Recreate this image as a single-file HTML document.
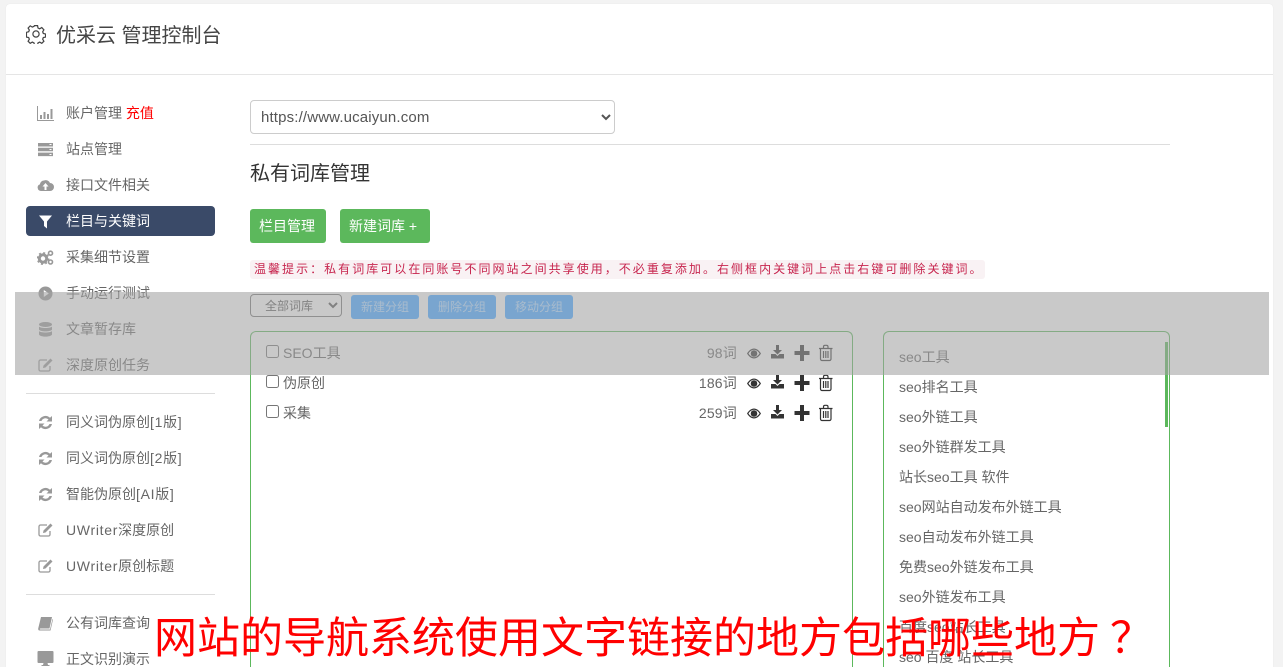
<!DOCTYPE html>
<html lang="zh-CN"><head><meta charset="utf-8"><title>优采云 管理控制台</title>
<style>
html,body{margin:0;padding:0;width:1283px;height:667px;overflow:hidden;background:#f3f3f3}
body{font-family:"Liberation Sans","Noto Sans CJK SC",sans-serif;font-size:14px;color:#555;position:relative}
.a{position:absolute;white-space:nowrap}
#card{left:6px;top:4px;width:1267px;height:663px;background:#fff;border-radius:4px 4px 0 0;box-shadow:0 0 1px #ddd}
.n{left:66px;height:20px;line-height:20px;font-size:14px;color:#666}
.n span{letter-spacing:.7px}
.i{left:37px;width:17px;height:17px;fill:#999}
.r{left:899px;height:20px;line-height:20px;color:#666}
.c{height:20px;line-height:20px;color:#666}
.cb{margin:0;width:13px;height:13px;left:266px}
.bb{top:295px;height:24px;width:68px;line-height:24px;text-align:center;background:#79a5cf;color:#aabccd;font-size:12px;border-radius:3px}
.gb{top:209px;height:34px;line-height:34px;background:#5cb85c;color:#fff;border-radius:3px;font-size:14px;padding-left:9px;box-sizing:border-box}
</style></head><body>
<div class="a" id="card"></div>
<div class="a" style="left:6px;top:74px;width:1267px;height:1px;background:#e5e5e5"></div>
<svg class="a" style="left:26px;top:24px" width="20" height="20" viewBox="0 0 18 18" fill="none" stroke="#444" stroke-width="1.1"><path d="M7.6 1.5h2.8l.4 2.1 1.5.7 1.9-1.1 1.9 2-1.1 1.8.6 1.5 2 .5v2.8l-2 .4-.6 1.500 1.100 1.800-1.900 1.900-1.900-1.100-1.500.7-.4 2h-2.800l-.4-2-1.500-.7-1.900 1.100-1.900-1.900 1.100-1.800-.6-1.500-2-.4V7.500l2-.5.6-1.500-1.100-1.800 1.900-2 1.900 1.100 1.500-.7z"/><circle cx="9" cy="9" r="2.800"/></svg>
<div class="a" style="left:56px;top:21px;height:30px;line-height:30px;font-size:20px;color:#444">优采云 管理控制台</div>

<div class="a" style="left:26px;top:206px;width:189px;height:30px;background:#3a4a68;border-radius:4px"></div>
<div class="a n" style="top:103px">账户管理 <b style="color:#f00;font-size:14px;font-weight:400">充值</b></div>
<div class="a n" style="top:139px">站点管理</div>
<div class="a n" style="top:175px">接口文件相关</div>
<div class="a n" style="top:211px;color:#fff">栏目与关键词</div>
<div class="a n" style="top:247px">采集细节设置</div>
<div class="a n" style="top:283px">手动运行测试</div>
<div class="a n" style="top:319px">文章暂存库</div>
<div class="a n" style="top:355px">深度原创任务</div>
<div class="a" style="left:26px;top:393px;width:189px;height:1px;background:#ddd"></div>
<div class="a n" style="top:412px">同义词伪原创<span>[1版]</span></div>
<div class="a n" style="top:448px">同义词伪原创<span>[2版]</span></div>
<div class="a n" style="top:484px">智能伪原创<span>[AI版]</span></div>
<div class="a n" style="top:520px"><span>UWriter</span>深度原创</div>
<div class="a n" style="top:556px"><span>UWriter</span>原创标题</div>
<div class="a" style="left:26px;top:594px;width:189px;height:1px;background:#ddd"></div>
<div class="a n" style="top:613px">公有词库查询</div>
<div class="a n" style="top:649px">正文识别演示</div>

<!-- sidebar icons -->
<svg class="a i" style="top:105px" viewBox="0 0 17 17"><path d="M0 1h1v14h16v1H0z"/><path d="M3 10h2v4H3zM6.500 7h2v7h-2zM10 9h2v5h-2zM13.500 4h2v10h-2z"/></svg>
<svg class="a i" style="top:141px" viewBox="0 0 17 17"><path d="M1 2h15v3.500H1zM1 6.800h15v3.500H1zM1 11.600h15v3.500H1z"/><path fill="#fff" d="M12.500 3h2v1h-2zM12.500 8h2v1h-2zM12.500 13h2v1h-2z"/></svg>
<svg class="a i" style="top:177px" viewBox="0 0 17 17"><path d="M4 14a3.500 3.500 0 0 1-1-6.800A4 4 0 0 1 7 3.500a4.500 4.500 0 0 1 6 2.500 4 4 0 0 1 0 8z"/><path fill="#fff" d="M8.500 6L5.500 9.500h2V13h2V9.500h2z"/></svg>
<svg class="a i" style="top:213px;fill:#fff" viewBox="0 0 17 17"><path d="M2 2.500h13l-5 6v7l-3-2.500V8.500z"/></svg>
<svg class="a i" style="top:249px" viewBox="0 0 17 17"><circle cx="6" cy="9.500" r="3.700" fill="none" stroke="#999" stroke-width="3"/><circle cx="6" cy="9.500" r="5.600" fill="none" stroke="#999" stroke-width="1.600" stroke-dasharray="2 2.400"/><circle cx="13.500" cy="4.200" r="2" fill="none" stroke="#999" stroke-width="1.600"/><circle cx="13.500" cy="13" r="2" fill="none" stroke="#999" stroke-width="1.600"/></svg>
<svg class="a i" style="top:285px" viewBox="0 0 17 17"><path fill-rule="evenodd" d="M8.500 1.500a7 7 0 1 0 0 14 7 7 0 0 0 0-14zM6.800 5l5 3.500-5 3.500z"/></svg>
<svg class="a i" style="top:321px" viewBox="0 0 17 17"><ellipse cx="8.500" cy="3.500" rx="6.500" ry="2.500"/><path d="M2 5.500c1 2 12 2 13 0v3c-1 2.500-12 2.500-13 0zM2 10c1 2 12 2 13 0v3.500c-1 2.800-12 2.800-13 0z"/></svg>
<svg class="a i" style="top:356px" viewBox="0 0 17 17"><path fill="none" stroke="#999" stroke-width="1.300" d="M13 10v3.500a1.500 1.500 0 0 1-1.500 1.500h-8A1.500 1.500 0 0 1 2 13.500v-8A1.500 1.500 0 0 1 3.500 4H10"/><path d="M6.500 9.500l7-7 2 2-7 7-2.500.5z"/></svg>
<svg class="a i" style="top:414px" viewBox="0 0 17 17"><path d="M2 7a6.600 6.600 0 0 1 11-3.200L15 2v5.500H9.500l2-2A4.300 4.300 0 0 0 4.500 7zM15 10A6.600 6.600 0 0 1 4 13.200L2 15V9.500h5.500l-2 2a4.300 4.300 0 0 0 7-1.500z"/></svg>
<svg class="a i" style="top:450px" viewBox="0 0 17 17"><path d="M2 7a6.600 6.600 0 0 1 11-3.200L15 2v5.500H9.500l2-2A4.300 4.300 0 0 0 4.500 7zM15 10A6.600 6.600 0 0 1 4 13.200L2 15V9.500h5.500l-2 2a4.300 4.300 0 0 0 7-1.500z"/></svg>
<svg class="a i" style="top:486px" viewBox="0 0 17 17"><path d="M2 7a6.600 6.600 0 0 1 11-3.200L15 2v5.500H9.500l2-2A4.300 4.300 0 0 0 4.500 7zM15 10A6.600 6.600 0 0 1 4 13.200L2 15V9.500h5.500l-2 2a4.300 4.300 0 0 0 7-1.500z"/></svg>
<svg class="a i" style="top:521px" viewBox="0 0 17 17"><path fill="none" stroke="#999" stroke-width="1.300" d="M13 10v3.500a1.500 1.500 0 0 1-1.500 1.500h-8A1.500 1.500 0 0 1 2 13.500v-8A1.500 1.500 0 0 1 3.500 4H10"/><path d="M6.500 9.500l7-7 2 2-7 7-2.500.5z"/></svg>
<svg class="a i" style="top:557px" viewBox="0 0 17 17"><path fill="none" stroke="#999" stroke-width="1.300" d="M13 10v3.500a1.500 1.500 0 0 1-1.500 1.500h-8A1.500 1.500 0 0 1 2 13.500v-8A1.500 1.500 0 0 1 3.500 4H10"/><path d="M6.500 9.500l7-7 2 2-7 7-2.500.5z"/></svg>
<svg class="a i" style="top:615px" viewBox="0 0 17 17"><path d="M4 2h11l-2.500 11.500H3.500c-.8 0-1 .9-.2 1H13L15.500 4l.5 .5L13.500 15.500H2.500C1.500 15.500 1 14.500 1.200 13.500z"/></svg>
<svg class="a" style="left:37px;top:650px;fill:#999" width="17" height="17" viewBox="0 0 17 17"><path d="M1.500 1h14a1 1 0 0 1 1 1v10a1 1 0 0 1-1 1H10.500l.5 2h1.500v1h-8v-1H6l.5-2H1.500a1 1 0 0 1-1-1V2a1 1 0 0 1 1-1z"/></svg>

<select class="a" style="left:250px;top:100px;width:365px;height:34px;border:1px solid #ccc;border-radius:4px;background:#fff;color:#555;font:15px 'Liberation Sans',sans-serif;letter-spacing:.15px;padding:0 6px"><option>https://www.ucaiyun.com</option></select>
<div class="a" style="left:250px;top:144px;width:920px;height:1px;background:#ddd"></div>
<div class="a" style="left:250px;top:160px;height:28px;line-height:28px;font-size:20px;color:#333">私有词库管理</div>
<div class="a gb" style="left:250px;width:76px">栏目管理</div>
<div class="a gb" style="left:340px;width:90px">新建词库 +</div>
<div class="a" style="left:250px;top:260px;width:731px;height:19px;line-height:19px;padding-left:4px;background:#f9f2f4;color:#c7254e;font-size:12px;letter-spacing:2.03px;border-radius:3px">温馨提示：私有词库可以在同账号不同网站之间共享使用，不必重复添加。右侧框内关键词上点击右键可删除关键词。</div>

<select class="a" style="left:250px;top:294px;width:92px;height:23px;border:1px solid #777;border-radius:4px;background:#fff;color:#555;font:12px 'Liberation Sans','Noto Sans CJK SC',sans-serif;padding:0 10px"><option>全部词库</option></select>

<div class="a" style="left:250px;top:331px;width:601px;height:336px;border:1px solid #5cb85c;border-bottom:0;border-radius:6px 6px 0 0"></div>
<div class="a" style="left:883px;top:331px;width:285px;height:336px;border:1px solid #5cb85c;border-bottom:0;border-radius:6px 6px 0 0"></div>
<div class="a" style="left:1165px;top:342px;width:3px;height:85px;background:#5cb85c"></div>

<input type="checkbox" class="a cb" style="top:345px"><div class="a c" style="left:283px;top:343px">SEO工具</div>
<input type="checkbox" class="a cb" style="top:375px"><div class="a c" style="left:283px;top:373px">伪原创</div>
<input type="checkbox" class="a cb" style="top:405px"><div class="a c" style="left:283px;top:403px">采集</div>
<div class="a c" style="right:546px;top:343px;letter-spacing:.2px">98词</div>
<div class="a c" style="right:546px;top:373px;letter-spacing:.2px">186词</div>
<div class="a c" style="right:546px;top:403px;letter-spacing:.2px">259词</div>

<svg class="a" style="left:745px;top:343px" width="92" height="80" viewBox="0 0 92 80" fill="#333">
<g><path fill-rule="evenodd" d="M2 10.500C4 7.300 6.500 5.500 9 5.500s5 1.800 7 5C14 13.700 11.500 15.500 9 15.500s-5-1.800-7-5zm7-3.300a3.300 3.300 0 1 0 0 6.600 3.300 3.300 0 0 0 0-6.600zM3.500 10.500C5 12.800 7 14.200 9 14.200s4-1.400 5.500-3.700C13 8.200 11 6.800 9 6.800s-4 1.400-5.500 3.700z"/><path d="M31 2h3v5h3l-4.500 4.500L28 7h3zM26 11h4.500l2 2 2-2H39v4.500H26z"/><path d="M55 2h4v6h5.500v4H59v6h-4v-6h-5.500V8H55z"/><path fill="none" stroke="#333" stroke-width="1.200" d="M74 5.500h13.500M78.500 5.500V3.800c0-1 .8-1.500 1.500-1.500h1.500c.7 0 1.500.5 1.500 1.500v1.700M75.500 5.500v10.500a1.500 1.500 0 0 0 1.500 1.500h7.500a1.500 1.500 0 0 0 1.500-1.500V5.500M78.500 8v7M80.800 8v7M83 8v7"/></g>
<g transform="translate(0 30)"><path fill-rule="evenodd" d="M2 10.500C4 7.300 6.500 5.500 9 5.500s5 1.800 7 5C14 13.700 11.500 15.500 9 15.500s-5-1.800-7-5zm7-3.300a3.300 3.300 0 1 0 0 6.600 3.300 3.300 0 0 0 0-6.600zM3.500 10.500C5 12.800 7 14.200 9 14.200s4-1.400 5.500-3.700C13 8.200 11 6.800 9 6.800s-4 1.400-5.500 3.700z"/><path d="M31 2h3v5h3l-4.500 4.500L28 7h3zM26 11h4.500l2 2 2-2H39v4.500H26z"/><path d="M55 2h4v6h5.500v4H59v6h-4v-6h-5.500V8H55z"/><path fill="none" stroke="#333" stroke-width="1.200" d="M74 5.500h13.500M78.500 5.500V3.800c0-1 .8-1.500 1.500-1.500h1.500c.7 0 1.500.5 1.500 1.500v1.700M75.500 5.500v10.500a1.500 1.500 0 0 0 1.500 1.500h7.500a1.500 1.500 0 0 0 1.500-1.500V5.500M78.500 8v7M80.800 8v7M83 8v7"/></g>
<g transform="translate(0 60)"><path fill-rule="evenodd" d="M2 10.500C4 7.300 6.500 5.500 9 5.500s5 1.800 7 5C14 13.700 11.500 15.500 9 15.500s-5-1.800-7-5zm7-3.300a3.300 3.300 0 1 0 0 6.600 3.300 3.300 0 0 0 0-6.600zM3.500 10.500C5 12.800 7 14.200 9 14.200s4-1.400 5.500-3.700C13 8.200 11 6.800 9 6.800s-4 1.400-5.500 3.700z"/><path d="M31 2h3v5h3l-4.500 4.500L28 7h3zM26 11h4.500l2 2 2-2H39v4.500H26z"/><path d="M55 2h4v6h5.500v4H59v6h-4v-6h-5.500V8H55z"/><path fill="none" stroke="#333" stroke-width="1.200" d="M74 5.500h13.500M78.500 5.500V3.800c0-1 .8-1.500 1.500-1.500h1.500c.7 0 1.500.5 1.500 1.500v1.700M75.500 5.500v10.500a1.500 1.500 0 0 0 1.500 1.500h7.500a1.500 1.500 0 0 0 1.500-1.500V5.500M78.500 8v7M80.800 8v7M83 8v7"/></g>
</svg>

<div class="a r" style="top:347px">seo工具</div>
<div class="a r" style="top:377px">seo排名工具</div>
<div class="a r" style="top:407px">seo外链工具</div>
<div class="a r" style="top:437px">seo外链群发工具</div>
<div class="a r" style="top:467px">站长seo工具 软件</div>
<div class="a r" style="top:497px">seo网站自动发布外链工具</div>
<div class="a r" style="top:527px">seo自动发布外链工具</div>
<div class="a r" style="top:557px">免费seo外链发布工具</div>
<div class="a r" style="top:587px">seo外链发布工具</div>
<div class="a r" style="top:617px">百度seo站长工具</div>
<div class="a r" style="top:647px">seo 百度 站长工具</div>

<div class="a" style="left:15px;top:292px;width:1254px;height:83px;background:rgba(162,162,162,.58)"></div>
<div class="a bb" style="left:351px">新建分组</div>
<div class="a bb" style="left:428px">删除分组</div>
<div class="a bb" style="left:505px">移动分组</div>

<div class="a" style="left:154px;top:605px;height:59px;padding-top:3px;line-height:62px;font-size:43px;color:#f00;overflow:hidden;padding-right:30px">网站的导航系统使用文字链接的地方包括哪些地方<span style="position:relative;left:10px">？</span></div>
</body></html>
